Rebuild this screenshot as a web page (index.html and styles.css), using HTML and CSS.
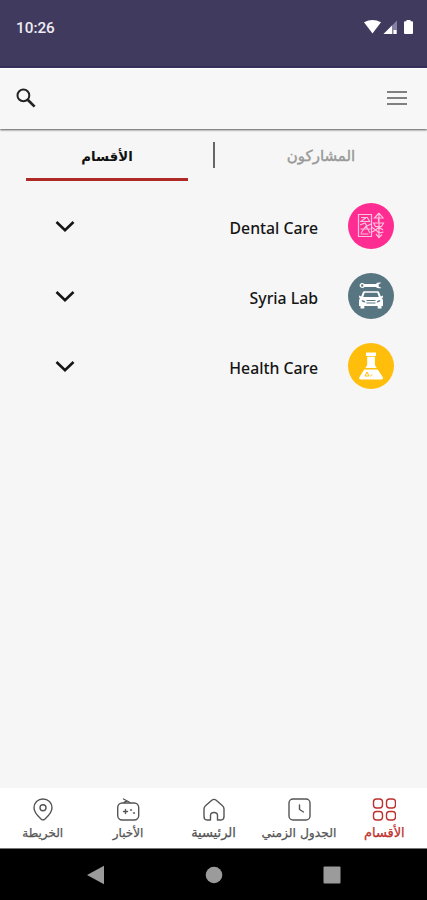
FILE: index.html
```
<!DOCTYPE html>
<html lang="ar" dir="rtl">
<head>
<meta charset="utf-8">
<title>الأقسام</title>
<link rel="stylesheet" href="styles.css">
</head>
<body>
<div class="app">
  <header class="status" dir="ltr">
    <span class="time">10:26</span>
    <svg class="status-icons" width="50" height="16" viewBox="0 0 50 16">
      <path fill="#fff" d="M0 3.200Q8.500-1 17 3.200L8.500 14.500Z"/>
      <path fill="#8681a0" d="M33 1.500V15H19.500Z"/>
      <path fill="#fff" d="M28 6.500V15H19.500ZM29.500 11h3v4h-3z"/>
      <path fill="#fff" d="M42.500 1h4v1.200h1.500q1 0 1 1V14q0 1-1 1h-7q-1 0-1-1V3.200q0-1 1-1h1.500z"/>
    </svg>
  </header>
  <div class="toolbar" dir="ltr">
    <svg width="20" height="20" viewBox="0 0 20 20" fill="none" stroke="#222"><circle cx="7.400" cy="7.400" r="5.900" stroke-width="2"/><path d="M11.700 11.700l6.900 6.900" stroke-width="2.700"/></svg>
    <svg width="20" height="16" viewBox="0 0 20 16"><path stroke="#808080" stroke-width="2.200" d="M0 2h20M0 8h20M0 14h20"/></svg>
  </div>
  <div class="tabs">
    <div class="tab"><span class="label tab-off">المشاركون</span></div>
    <div class="divider"></div>
    <div class="tab active"><span class="label tab-on">الأقسام</span></div>
  </div>
  <main class="list" dir="ltr">
    <div class="row">
      <svg class="chevron" width="20" height="12" viewBox="0 0 20 12"><path d="M1.500 2L10 10.200L18.500 2"/></svg>
      <span class="name">Dental Care</span>
      <span class="badge pink">
        <svg width="28" height="28" viewBox="0 0 28 28" fill="none" stroke="#ffc0df" stroke-width="1.200">
          <path d="M1.500 2.500h13v22h-13zM4 5.500h5l-5 4h8M10 5l3 5M3 13l5-2 2 3 4-2M4 21l5-7 4 7M3.500 17h10M3.500 22h8"/>
          <path d="M22 1v25M22 1l-4.500 5h4v4M22 1l4 5h-4M16.500 11h10l-2 3.500h-6zM14.500 15l4 3 3.500-3 4 3M15 20l4-2 3 3 4.500-1M19 22l3 3.500 3-3"/>
        </svg>
      </span>
    </div>
    <div class="row">
      <svg class="chevron" width="20" height="12" viewBox="0 0 20 12"><path d="M1.500 2L10 10.200L18.500 2"/></svg>
      <span class="name">Syria Lab</span>
      <span class="badge slate">
        <svg width="28" height="28" viewBox="0 0 28 28">
          <path fill="#fff" fill-rule="evenodd" d="M2.500 3.500a2.800 2.800 0 0 1 4.900-1.600h11.500Q20.500 0 24.500.8l-2.800 1.500v2.200l2.800 1.500Q20.500 6.800 18.900 5H7.400A2.800 2.800 0 0 1 2.500 3.500zM4 3.500a1.200 1.200 0 1 0 2.400 0 1.200 1.200 0 1 0-2.400 0z"/>
          <path fill="#fff" fill-rule="evenodd" d="M7.200 9.300h13.600q1 0 1.500 1.300l1.500 3.900 2.200-1v2l-1 .5q1 1.300 1 3V24h-1.500v2.500h-3.800V24H7.300v2.500H3.500V24H2v-5q0-1.700 1-3l-1-.5v-2l2.200 1 1.500-3.900q.5-1.300 1.500-1.300zM7.700 10.800L6.200 15h15.600l-1.500-4.200zM4.500 18l1 2 3 .5-1-1.800zM23.500 18l-1 2-3 .5 1-1.800zM9.500 18v1h9v-1zM9.500 20.500v1h9v-1z"/>
        </svg>
      </span>
    </div>
    <div class="row">
      <svg class="chevron" width="20" height="12" viewBox="0 0 20 12"><path d="M1.500 2L10 10.200L18.500 2"/></svg>
      <span class="name">Health Care</span>
      <span class="badge amber">
        <svg width="28" height="28" viewBox="0 0 28 28">
          <path fill="#fff" d="M9 .5h10V4H9zM10.200 4.800h7.700v8.200l1.800 3H8.400l1.800-3zM7.200 17.500h13.500l5 7.500q.8 2.500-1.500 2.500H4q-2.500 0-1.500-2.500z"/>
          <path fill="none" stroke="#ffbe0b" d="M8 24l2-4 2 4zM13.500 24.500l1.500-2"/>
        </svg>
      </span>
    </div>
  </main>
  <nav class="bottom">
    <a class="item current">
      <svg width="24" height="24" viewBox="0 0 24 24"><rect x="1.500" y="1" width="9" height="9" rx="3"/><rect x="14.500" y="1" width="9" height="9" rx="3"/><rect x="1.500" y="13.500" width="9" height="8.500" rx="3"/><rect x="14.500" y="13.500" width="9" height="8.500" rx="3"/></svg>
      <span class="label n1">الأقسام</span>
    </a>
    <a class="item">
      <svg width="24" height="24" viewBox="0 0 24 24"><rect x="2" y="1" width="21" height="21" rx="4"/><path d="M12.500 7v4.500l4 2.500"/></svg>
      <span class="label n2">الجدول الزمني</span>
    </a>
    <a class="item">
      <svg width="24" height="24" viewBox="0 0 24 24"><path d="M8.500 22H5q-3-.2-3-3.500V11q0-2 1.500-3.200l6.300-5.600q2.200-1.700 4.400 0l6.300 5.600Q22 9 22 11v7.500q0 3.300-3 3.500h-3.500v-4.500q0-3-3.500-3t-3.500 3z"/></svg>
      <span class="label n3">الرئيسية</span>
    </a>
    <a class="item">
      <svg width="24" height="24" viewBox="0 0 24 24"><rect x="1.700" y="5" width="21" height="17" rx="4.500"/><path d="M14 4.500L7.500 1M8 4.500l3-1.500M7.500 13.500h4M9.500 11.500v4M14.500 12h1M17.500 15h1"/></svg>
      <span class="label n4">الأخبار</span>
    </a>
    <a class="item">
      <svg width="24" height="24" viewBox="0 0 24 24"><path d="M12 1c-5.200 0-9 3.900-9 8.800 0 5.200 4.400 8.800 7.200 11.300q1.800 1.500 3.600 0C16.600 18.600 21 15 21 9.800 21 4.900 17.200 1 12 1z"/><circle cx="12" cy="9.800" r="3"/></svg>
      <span class="label n5">الخريطة</span>
    </a>
  </nav>
  <footer class="system" dir="ltr">
    <svg width="18" height="20" viewBox="0 0 18 20"><path d="M1 10L18 .8V19.200Z"/></svg>
    <svg width="18" height="18" viewBox="0 0 18 18"><circle cx="9" cy="9" r="8.300"/></svg>
    <svg width="18" height="18" viewBox="0 0 18 18"><rect x=".5" y=".5" width="17" height="17" rx="1"/></svg>
  </footer>
</div>
</body>
</html>
```
FILE: styles.css
```
* { box-sizing: border-box; }
body { margin: 0; background: #f6f6f6; font-family: "Noto Sans", "DejaVu Sans", sans-serif; }
svg { display: block; flex: none; }
.app { width: 427px; height: 900px; display: flex; flex-direction: column; overflow: hidden; }
.status { height: 68px; background: #403b5e; border-bottom: 2px solid #37305b; display: flex; justify-content: space-between; align-items: flex-start; padding: 19px 14px 0 16px; }
.time { font: 500 15.300px/19px Roboto, sans-serif; color: #eeedf5; }
.status-icons { margin-right: -1px; }
.toolbar { height: 61px; flex: none; background: #f7f7f7; display: flex; justify-content: space-between; align-items: center; padding: 0 20px 2px 16px; box-shadow: 0 1px 2px #555; border-top: 1px solid #fff; }
.tabs { height: 61px; display: flex; align-items: flex-start; padding: 0 26px; margin-top: 1px; }
.tab { height: 51px; flex: 1; display: flex; align-items: center; justify-content: center; }
.active { border-bottom: 3px solid #ae2a25; flex: 0 0 162px; padding-top: 4px; }
.tab:first-child { flex: 0 0 160px; }
.divider { flex: none; width: 2px; height: 26px; background: #666; margin: 12px 26px 0 25px; }
.label { display: inline-block; white-space: nowrap; font-family: "DejaVu Sans", sans-serif; }
.tab-off { font-size: 15px; color: #999; -webkit-text-stroke: .4px #999; }
.tab-on { font-size: 13.300px; color: #111; font-weight: bold; }
.list { flex: 1; display: flex; flex-direction: column; }
.row { height: 70px; display: flex; align-items: center; padding: 0 33px 0 54.500px; }
.chevron path { fill: none; stroke: #151515; stroke-width: 2.600; }
.name { margin-left: auto; margin-right: 30px; font-size: 15.800px; font-weight: 500; color: #151515; padding-top: 3px; }
.badge { width: 46px; height: 46px; border-radius: 50%; display: grid; place-items: center; }
.pink { background: #ff2c91; }
.slate { background: #587681; }
.amber { background: #ffbe0b; }
.bottom { height: 61px; background: #fff; display: grid; grid-template-columns: repeat(5, 1fr); border-bottom: 1px solid #777; }
.item { display: flex; flex-direction: column; align-items: center; color: #555; padding-top: 10px; }
.item svg { fill: none; stroke: currentColor; stroke-width: 1.400; stroke-linejoin: round; stroke-linecap: round; }
.item .label { font-size: 12px; line-height: 18px; margin-top: 2px; -webkit-text-stroke: .25px currentColor; }
.item .n1, .item .n3 { font-size: 13px; }
.item .n2 { font-size: 12.300px; }
.current { color: #bd302d; }
.system { height: 51px; background: #000; display: flex; justify-content: space-between; align-items: center; padding: 0 86px; }
.system svg { fill: #9b9b9b; }
```
